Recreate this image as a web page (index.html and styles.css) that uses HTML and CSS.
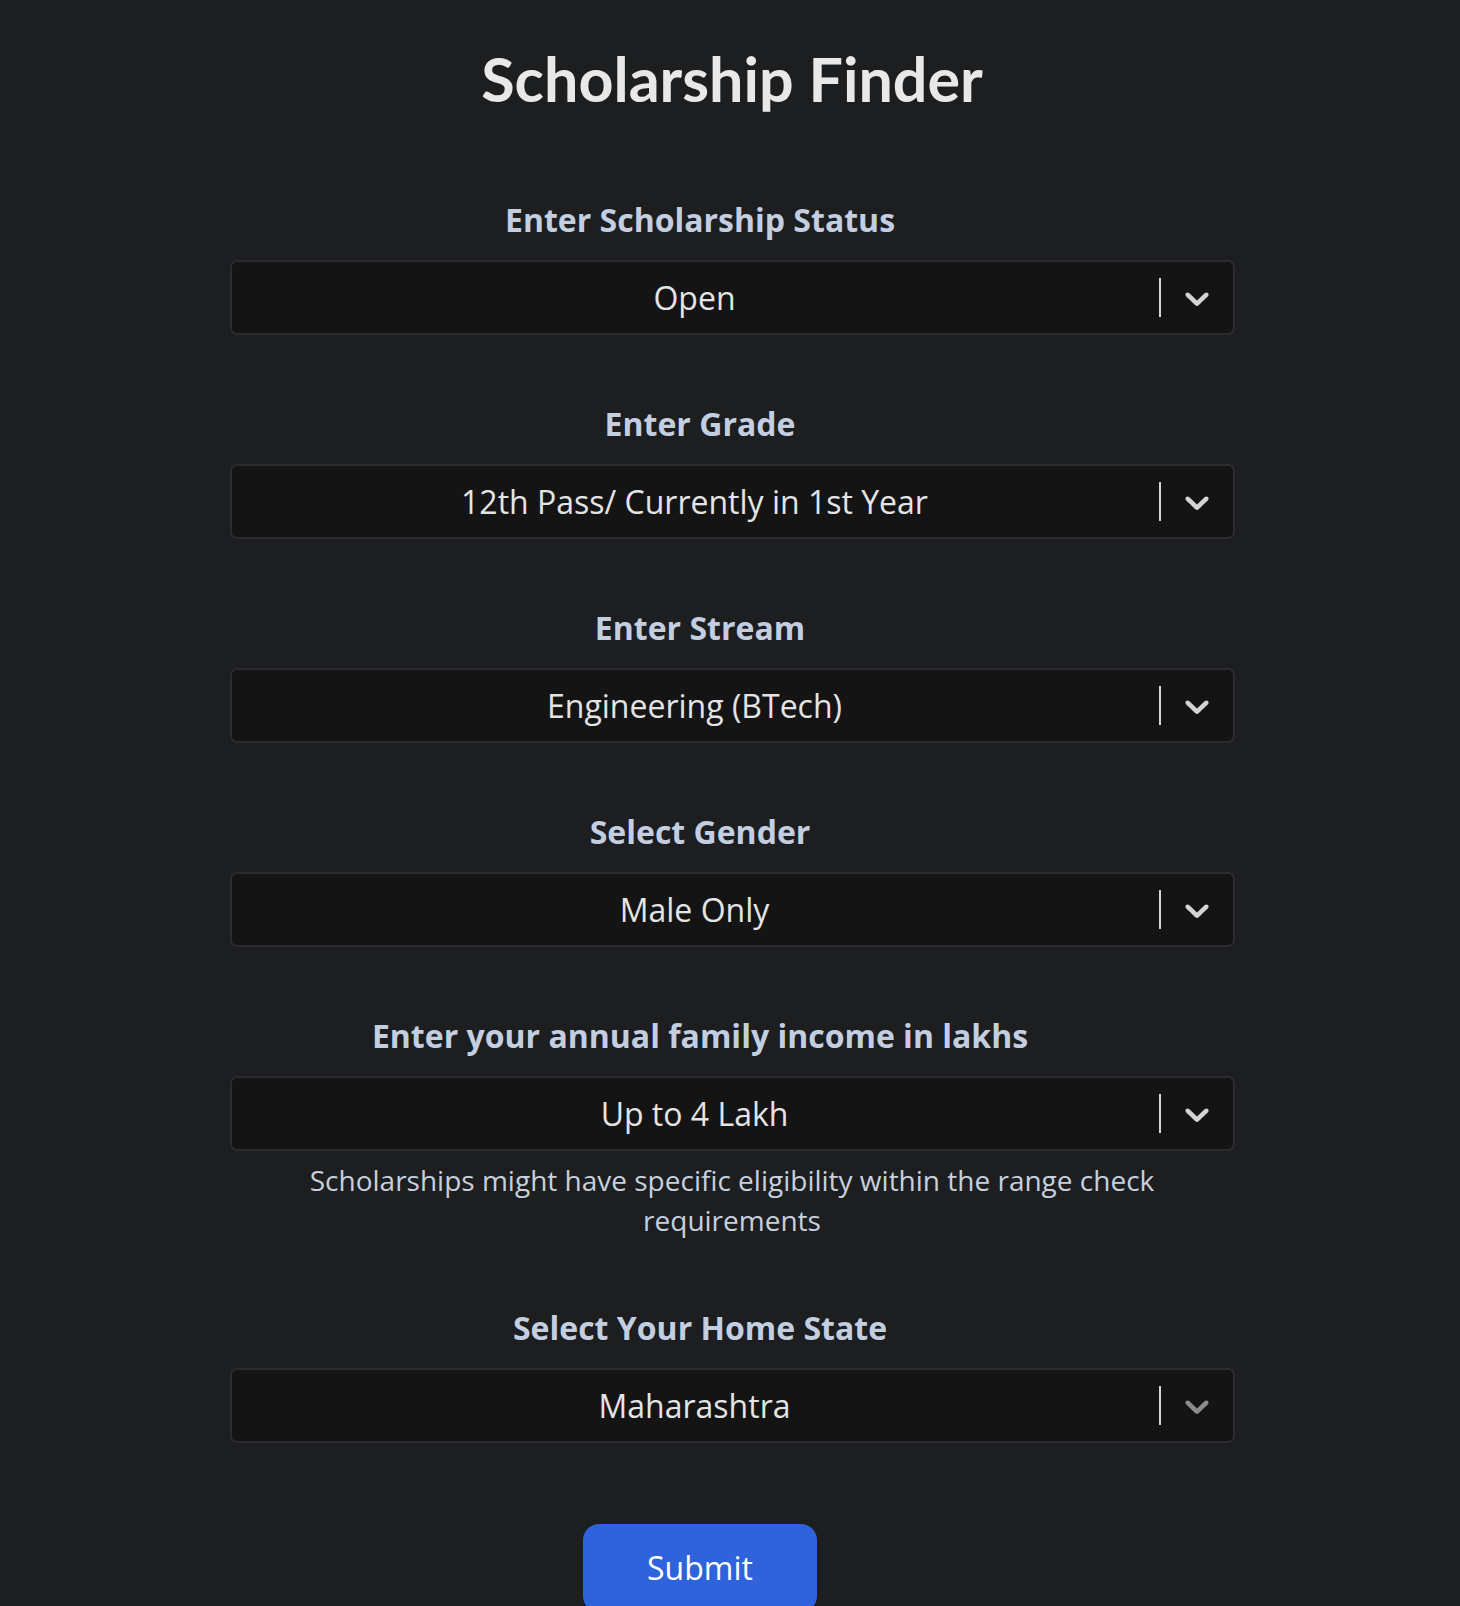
FILE: index.html
```html
<!DOCTYPE html>
<html lang="en">
<head>
<meta charset="utf-8">
<title>Scholarship Finder</title>
<link rel="stylesheet" href="styles.css">
</head>
<body>
<main class="page">
  <h1 class="title">Scholarship Finder</h1>
  <form class="form">
    <div class="field">
      <label class="label">Enter Scholarship Status</label>
      <div class="select">
        <div class="value">Open</div>
        <span class="sep"></span>
        <span class="indicator"><svg viewBox="0 0 20 20" width="40" height="40"><path d="M4.516 7.548c0.436-0.446 1.043-0.481 1.576 0l3.908 3.747 3.908-3.747c0.533-0.481 1.141-0.446 1.574 0 0.436 0.445 0.408 1.197 0 1.615-0.406 0.418-4.695 4.502-4.695 4.502-0.217 0.223-0.502 0.335-0.787 0.335s-0.57-0.112-0.789-0.335c0 0-4.287-4.084-4.695-4.502s-0.436-1.170 0-1.615z"/></svg></span>
      </div>
    </div>
    <div class="field">
      <label class="label">Enter Grade</label>
      <div class="select">
        <div class="value">12th Pass/ Currently in 1st Year</div>
        <span class="sep"></span>
        <span class="indicator"><svg viewBox="0 0 20 20" width="40" height="40"><path d="M4.516 7.548c0.436-0.446 1.043-0.481 1.576 0l3.908 3.747 3.908-3.747c0.533-0.481 1.141-0.446 1.574 0 0.436 0.445 0.408 1.197 0 1.615-0.406 0.418-4.695 4.502-4.695 4.502-0.217 0.223-0.502 0.335-0.787 0.335s-0.57-0.112-0.789-0.335c0 0-4.287-4.084-4.695-4.502s-0.436-1.170 0-1.615z"/></svg></span>
      </div>
    </div>
    <div class="field">
      <label class="label">Enter Stream</label>
      <div class="select">
        <div class="value">Engineering (BTech)</div>
        <span class="sep"></span>
        <span class="indicator"><svg viewBox="0 0 20 20" width="40" height="40"><path d="M4.516 7.548c0.436-0.446 1.043-0.481 1.576 0l3.908 3.747 3.908-3.747c0.533-0.481 1.141-0.446 1.574 0 0.436 0.445 0.408 1.197 0 1.615-0.406 0.418-4.695 4.502-4.695 4.502-0.217 0.223-0.502 0.335-0.787 0.335s-0.57-0.112-0.789-0.335c0 0-4.287-4.084-4.695-4.502s-0.436-1.170 0-1.615z"/></svg></span>
      </div>
    </div>
    <div class="field">
      <label class="label">Select Gender</label>
      <div class="select">
        <div class="value">Male Only</div>
        <span class="sep"></span>
        <span class="indicator"><svg viewBox="0 0 20 20" width="40" height="40"><path d="M4.516 7.548c0.436-0.446 1.043-0.481 1.576 0l3.908 3.747 3.908-3.747c0.533-0.481 1.141-0.446 1.574 0 0.436 0.445 0.408 1.197 0 1.615-0.406 0.418-4.695 4.502-4.695 4.502-0.217 0.223-0.502 0.335-0.787 0.335s-0.57-0.112-0.789-0.335c0 0-4.287-4.084-4.695-4.502s-0.436-1.170 0-1.615z"/></svg></span>
      </div>
    </div>
    <div class="field field-help">
      <label class="label">Enter your annual family income in lakhs</label>
      <div class="select">
        <div class="value">Up to 4 Lakh</div>
        <span class="sep"></span>
        <span class="indicator"><svg viewBox="0 0 20 20" width="40" height="40"><path d="M4.516 7.548c0.436-0.446 1.043-0.481 1.576 0l3.908 3.747 3.908-3.747c0.533-0.481 1.141-0.446 1.574 0 0.436 0.445 0.408 1.197 0 1.615-0.406 0.418-4.695 4.502-4.695 4.502-0.217 0.223-0.502 0.335-0.787 0.335s-0.57-0.112-0.789-0.335c0 0-4.287-4.084-4.695-4.502s-0.436-1.170 0-1.615z"/></svg></span>
      </div>
      <p class="help">Scholarships might have specific eligibility within the range check requirements</p>
    </div>
    <div class="field field-last">
      <label class="label">Select Your Home State</label>
      <div class="select">
        <div class="value">Maharashtra</div>
        <span class="sep"></span>
        <span class="indicator indicator-dim"><svg viewBox="0 0 20 20" width="40" height="40"><path d="M4.516 7.548c0.436-0.446 1.043-0.481 1.576 0l3.908 3.747 3.908-3.747c0.533-0.481 1.141-0.446 1.574 0 0.436 0.445 0.408 1.197 0 1.615-0.406 0.418-4.695 4.502-4.695 4.502-0.217 0.223-0.502 0.335-0.787 0.335s-0.57-0.112-0.789-0.335c0 0-4.287-4.084-4.695-4.502s-0.436-1.170 0-1.615z"/></svg></span>
      </div>
    </div>
    <div class="actions">
      <button type="button" class="submit">Submit</button>
    </div>
  </form>
</main>
</body>
</html>
```

FILE: styles.css
```css
html, body {
  margin: 0;
  padding: 0;
}

body {
  background: #1d1e20;
  font-family: "Open Sans", "Noto Sans", sans-serif;
  color: #e6e6e6;
  padding-left: 4px;
}

.page {
  width: 1005px;
  margin: 0 auto;
  padding-top: 42px;
}

.title {
  margin: 0;
  font-family: Lato, "Open Sans", sans-serif;
  font-weight: 700;
  font-size: 61px;
  line-height: 1.2;
  text-align: center;
  color: #e8e8e8;
}

.form {
  display: flex;
  flex-direction: column;
  margin-top: 85px;
}

.field {
  display: flex;
  flex-direction: column;
  margin-bottom: 69px;
}

.field-help {
  margin-bottom: 68px;
}

.field-last {
  margin-bottom: 81px;
}

.label {
  display: block;
  font-size: 32px;
  font-weight: 700;
  line-height: 40px;
  color: #c3cee1;
  text-align: center;
  padding-right: 64px;
  margin-bottom: 20px;
}

.select {
  display: flex;
  align-items: center;
  height: 75px;
  box-sizing: border-box;
  background: #141414;
  border: 2px solid #2a2c2f;
  border-radius: 7px;
}

.value {
  flex: 1;
  text-align: center;
  font-size: 32px;
  color: #e4e4e4;
  padding-right: 1px;
}

.sep {
  width: 2px;
  height: 39px;
  background: #d6d6d6;
}

.indicator {
  display: flex;
  align-items: center;
  padding: 0 16px;
  fill: #d4d4d4;
}

.indicator-dim {
  fill: #8c8c8c;
}

.help {
  margin: 9px 0 0;
  font-size: 28px;
  line-height: 40px;
  text-align: center;
  color: #c7d0de;
  padding: 0 70px;
}

.actions {
  display: flex;
  justify-content: center;
  padding-right: 64px;
}

.submit {
  font-family: "Open Sans", sans-serif;
  font-size: 32px;
  line-height: 48px;
  color: #ffffff;
  background: #2f63dc;
  border: none;
  border-radius: 16px;
  padding: 20px 64px;
}
```
